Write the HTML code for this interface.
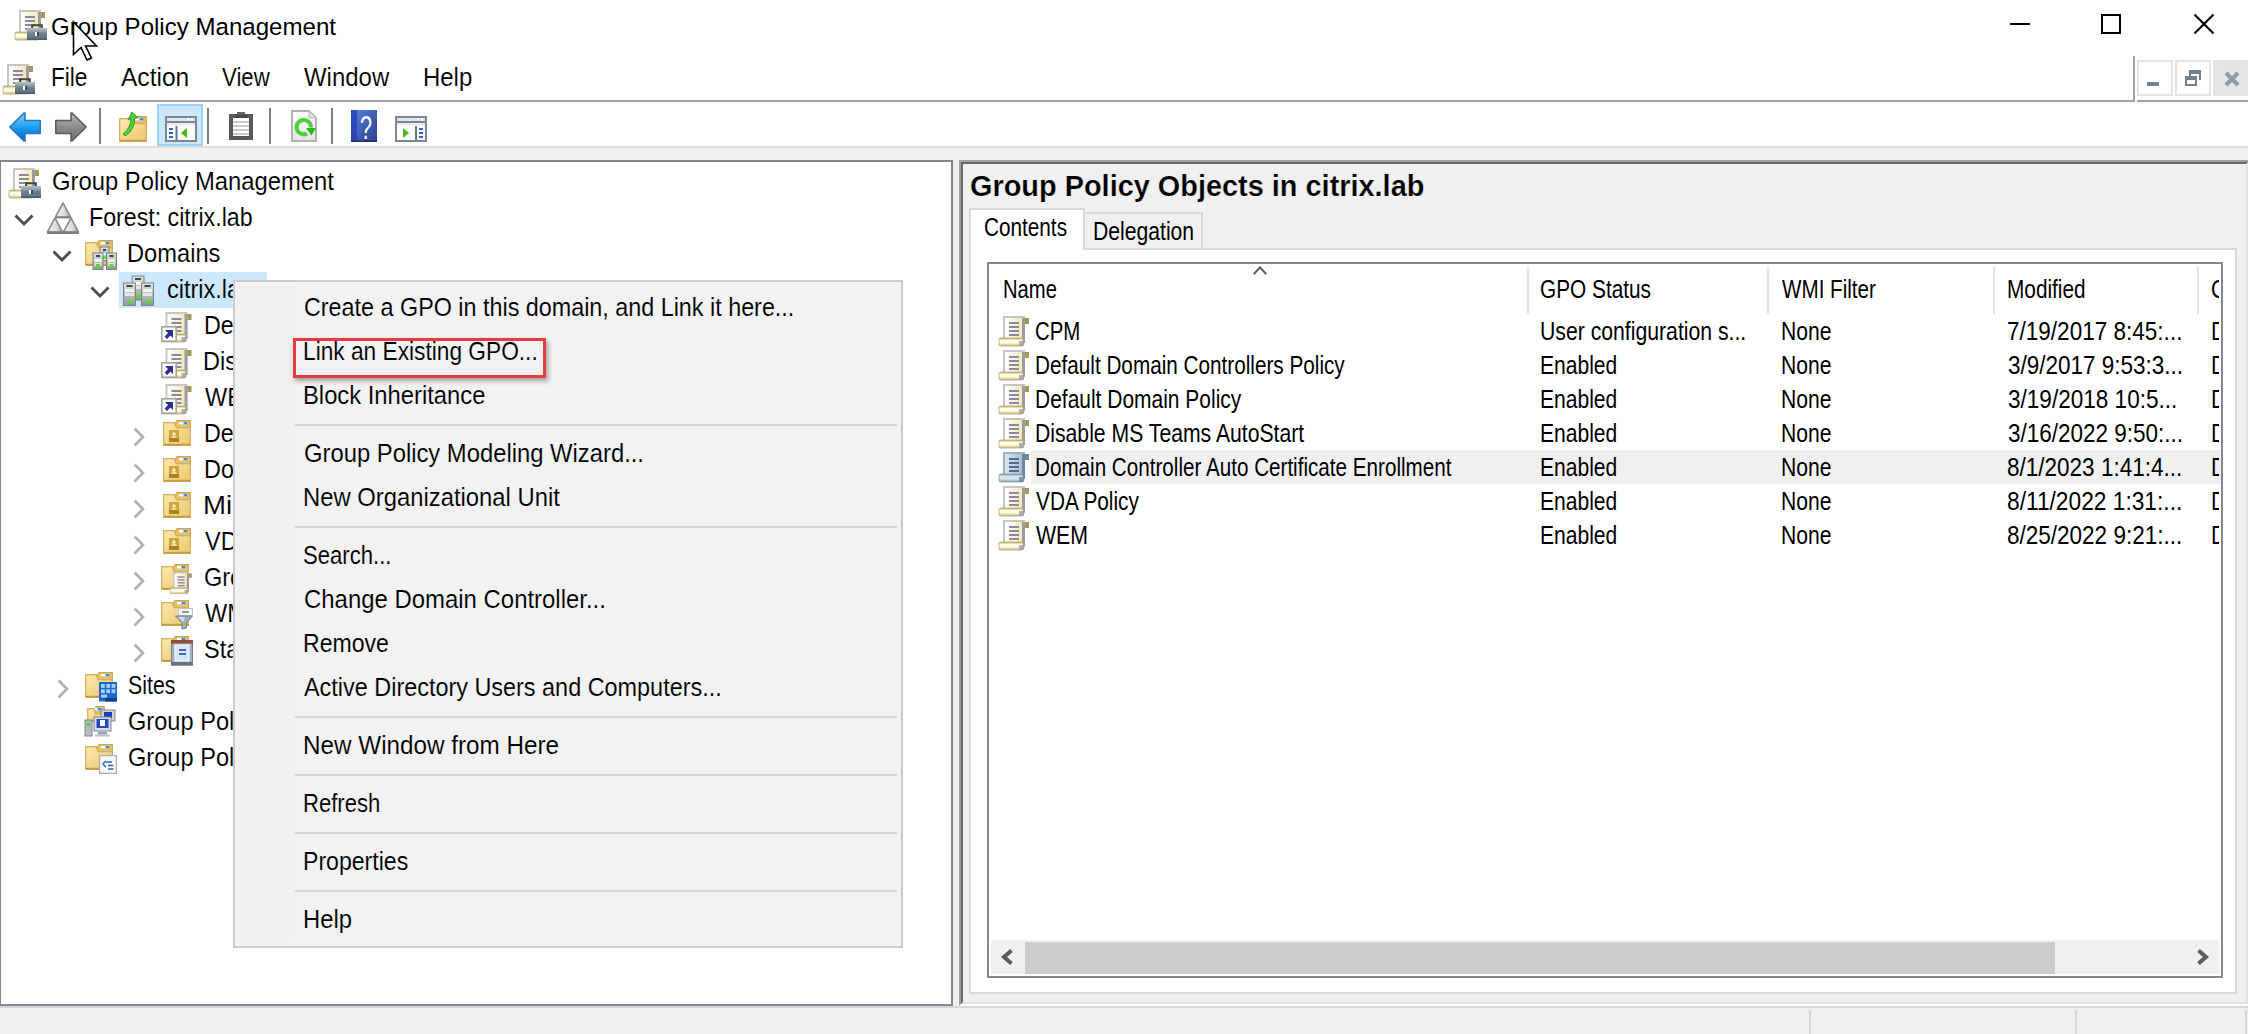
<!DOCTYPE html>
<html lang="en"><head><meta charset="utf-8"><title>Group Policy Management</title>
<style>
html,body{margin:0;padding:0;background:#fff;}
body{width:2248px;height:1034px;position:relative;overflow:hidden;font-family:"Liberation Sans",sans-serif;color:#000;}
.sec{position:absolute;left:0;top:0;width:0;height:0;margin:0;padding:0;}
.b{position:absolute;}
.ic{position:absolute;display:block;overflow:visible;}
.t{position:absolute;white-space:pre;transform-origin:0 0;display:block;}
.ui{font-family:"Liberation Sans",sans-serif;}
.ms{font-family:"Liberation Sans",sans-serif;}
.msb{font-family:"Liberation Sans",sans-serif;font-weight:bold;}
</style></head>
<body>
<header id="titlebar" class="sec">
<svg class="ic" style="left:15px;top:8px" width="32" height="32" viewBox="0 0 32 32"><linearGradient id="g2" x1="0" y1="0" x2="1" y2="0"><stop offset="0" stop-color="#ffffff"/><stop offset="1" stop-color="#f6e8b4"/></linearGradient><linearGradient id="g3" x1="0" y1="0" x2="0" y2="1"><stop offset="0" stop-color="#b9a867"/><stop offset="0.3" stop-color="#fffbe6"/><stop offset="0.6" stop-color="#fffbe6"/><stop offset="1" stop-color="#c9b97c"/></linearGradient><g transform="translate(-1,2)"><rect x="5" y="0" width="22" height="27" fill="#c6c6c6"/><rect x="23" y="2" width="4" height="25" fill="#9c9ca4"/><rect x="7" y="2" width="17" height="24" fill="url(#g2)"/><rect x="27" y="2" width="4" height="6" fill="#a89858"/><rect x="25" y="2" width="2" height="3" fill="#9c9ca4"/><rect x="11" y="6" width="10" height="2" fill="#8c88aa"/><rect x="11" y="10" width="10" height="2" fill="#8c88aa"/><rect x="11" y="14" width="10" height="2" fill="#8c88aa"/><rect x="11" y="18" width="10" height="2" fill="#8c88aa"/><rect x="1" y="22" width="24" height="8" rx="1.5" fill="url(#g3)" stroke="#b9a867" stroke-width="0.8"/><rect x="21" y="25" width="5" height="5" fill="#9c9ca4" opacity="0.8"/></g><linearGradient id="g1" x1="0" y1="0" x2="0" y2="1"><stop offset="0" stop-color="#b4c1cb"/><stop offset="0.3" stop-color="#8c9eab"/><stop offset="0.45" stop-color="#6f818e"/><stop offset="1" stop-color="#5d6f7c"/></linearGradient><path d="M17.2 21 L17.2 17.2 L26.8 17.2 L26.8 21" fill="none" stroke="#45433a" stroke-width="2"/><rect x="12" y="20" width="20" height="12" fill="url(#g1)"/><rect x="12" y="30.5" width="20" height="1.5" fill="#4d5c68"/><rect x="20" y="24" width="2" height="4" fill="#fff"/><rect x="22" y="24" width="2" height="4" fill="#3d4a55"/></svg>
<span id="t0" class="t ui" style="left:51.09px;top:15.46px;font-size:24.5px;line-height:24.5px;transform:scaleX(0.9824);">Group Policy Management</span>
<div class="b" style="left:2010px;top:23px;width:20px;height:2px;background:#000;"></div>
<div class="b" style="left:2101px;top:14px;width:20px;height:20px;border:2px solid #000;box-sizing:border-box;"></div>
<svg class="ic" style="left:2192px;top:12px" width="24" height="24" viewBox="0 0 24 24"><path d="M2.5 2.5 L21.5 21.5 M21.5 2.5 L2.5 21.5" stroke="#000" stroke-width="2.2" fill="none"/></svg>
</header>
<svg class="ic" style="left:72px;top:20px;z-index:50" width="28" height="42" viewBox="0 0 28 42"><path d="M1.5 2 L1.5 34.5 L9 27.5 L15 40 L19.5 38 L13.5 26 L24.5 26 Z" fill="#fff" stroke="#000" stroke-width="1.6" stroke-linejoin="miter"/></svg>
<nav id="menubar" class="sec">
<svg class="ic" style="left:3px;top:62px" width="32" height="32" viewBox="0 0 32 32"><linearGradient id="g5" x1="0" y1="0" x2="1" y2="0"><stop offset="0" stop-color="#ffffff"/><stop offset="1" stop-color="#f6e8b4"/></linearGradient><linearGradient id="g6" x1="0" y1="0" x2="0" y2="1"><stop offset="0" stop-color="#b9a867"/><stop offset="0.3" stop-color="#fffbe6"/><stop offset="0.6" stop-color="#fffbe6"/><stop offset="1" stop-color="#c9b97c"/></linearGradient><g transform="translate(-1,2)"><rect x="5" y="0" width="22" height="27" fill="#c6c6c6"/><rect x="23" y="2" width="4" height="25" fill="#9c9ca4"/><rect x="7" y="2" width="17" height="24" fill="url(#g5)"/><rect x="27" y="2" width="4" height="6" fill="#a89858"/><rect x="25" y="2" width="2" height="3" fill="#9c9ca4"/><rect x="11" y="6" width="10" height="2" fill="#8c88aa"/><rect x="11" y="10" width="10" height="2" fill="#8c88aa"/><rect x="11" y="14" width="10" height="2" fill="#8c88aa"/><rect x="11" y="18" width="10" height="2" fill="#8c88aa"/><rect x="1" y="22" width="24" height="8" rx="1.5" fill="url(#g6)" stroke="#b9a867" stroke-width="0.8"/><rect x="21" y="25" width="5" height="5" fill="#9c9ca4" opacity="0.8"/></g><linearGradient id="g4" x1="0" y1="0" x2="0" y2="1"><stop offset="0" stop-color="#b4c1cb"/><stop offset="0.3" stop-color="#8c9eab"/><stop offset="0.45" stop-color="#6f818e"/><stop offset="1" stop-color="#5d6f7c"/></linearGradient><path d="M17.2 21 L17.2 17.2 L26.8 17.2 L26.8 21" fill="none" stroke="#45433a" stroke-width="2"/><rect x="12" y="20" width="20" height="12" fill="url(#g4)"/><rect x="12" y="30.5" width="20" height="1.5" fill="#4d5c68"/><rect x="20" y="24" width="2" height="4" fill="#fff"/><rect x="22" y="24" width="2" height="4" fill="#3d4a55"/></svg>
<span id="t1" class="t ui" style="left:50.74px;top:64.67px;font-size:25.2px;line-height:25.2px;transform:scaleX(0.8982);-webkit-text-stroke:0.1px #fff;">File</span>
<span id="t2" class="t ui" style="left:120.95px;top:64.67px;font-size:25.2px;line-height:25.2px;transform:scaleX(0.9747);-webkit-text-stroke:0.1px #fff;">Action</span>
<span id="t3" class="t ui" style="left:222.20px;top:64.67px;font-size:25.2px;line-height:25.2px;transform:scaleX(0.8818);-webkit-text-stroke:0.1px #fff;">View</span>
<span id="t4" class="t ui" style="left:304.49px;top:64.67px;font-size:25.2px;line-height:25.2px;transform:scaleX(0.9515);-webkit-text-stroke:0.1px #fff;">Window</span>
<span id="t5" class="t ui" style="left:422.73px;top:64.67px;font-size:25.2px;line-height:25.2px;transform:scaleX(0.9510);-webkit-text-stroke:0.1px #fff;">Help</span>
<div class="b" style="left:0px;top:100px;width:2135px;height:2px;background:#a0a0a0;"></div>
<div class="b" style="left:2137px;top:100px;width:111px;height:2px;background:#a0a0a0;"></div>
<div class="b" style="left:2133px;top:56px;width:2px;height:46px;background:#a0a0a0;"></div>
<div class="b" style="left:0px;top:102px;width:2248px;height:2px;background:#f5f8fd;"></div>
<div class="b" style="left:2137px;top:60px;width:36px;height:36px;background:#fff;border:2px solid #e5e5e5;box-sizing:border-box;"></div>
<div class="b" style="left:2147px;top:82px;width:12px;height:4px;background:#73818f;"></div>
<div class="b" style="left:2175px;top:60px;width:36px;height:36px;background:#fff;border:2px solid #e5e5e5;box-sizing:border-box;"></div>
<div class="b" style="left:2189px;top:70px;width:12px;height:10px;border:2px solid #73818f;border-top-width:4px;border-bottom:none;box-sizing:border-box;"></div>
<div class="b" style="left:2185px;top:76px;width:12px;height:10px;background:#fff;border:2px solid #73818f;border-top-width:4px;box-sizing:border-box;"></div>
<div class="b" style="left:2213px;top:60px;width:35px;height:36px;background:#e5e5e5;"></div>
<svg class="ic" style="left:2224px;top:71px" width="16" height="16" viewBox="0 0 16 16"><path d="M2 2 L14 14 M14 2 L2 14" stroke="#8e9bab" stroke-width="4" fill="none"/></svg>
</nav>
<div id="toolbar" class="sec">
<svg class="ic" style="left:9px;top:112px" width="32" height="30" viewBox="0 0 32 30"><linearGradient id="g7" x1="0" y1="0" x2="0" y2="1"><stop offset="0" stop-color="#7fd4ff"/><stop offset="0.5" stop-color="#1ea0f5"/><stop offset="1" stop-color="#0a62c4"/></linearGradient><path d="M0.8 15 L15 1 L16 1 L16 8.5 L31.2 8.5 L31.2 21.5 L16 21.5 L16 29 L15 29 Z" fill="url(#g7)" stroke="#2a74c4" stroke-width="1.6" stroke-linejoin="round"/></svg>
<svg class="ic" style="left:55px;top:112px" width="32" height="30" viewBox="0 0 32 30"><linearGradient id="g8" x1="0" y1="0" x2="0" y2="1"><stop offset="0" stop-color="#b8b8b8"/><stop offset="0.5" stop-color="#8c8c8c"/><stop offset="1" stop-color="#707070"/></linearGradient><path d="M31.2 15 L17 1 L16 1 L16 8.5 L0.8 8.5 L0.8 21.5 L16 21.5 L16 29 L17 29 Z" fill="url(#g8)" stroke="#5c5c5c" stroke-width="1.6" stroke-linejoin="round"/></svg>
<div class="b" style="left:99px;top:108px;width:2px;height:36px;background:#808080;"></div>
<div class="b" style="left:207px;top:108px;width:2px;height:36px;background:#808080;"></div>
<div class="b" style="left:269px;top:108px;width:2px;height:36px;background:#808080;"></div>
<div class="b" style="left:331px;top:108px;width:2px;height:36px;background:#808080;"></div>
<svg class="ic" style="left:119px;top:112px" width="28" height="30" viewBox="0 0 28 30"><g transform="translate(0,4)"><linearGradient id="g9" x1="0" y1="0" x2="1" y2="1"><stop offset="0" stop-color="#fdeab0"/><stop offset="1" stop-color="#ebc56c"/></linearGradient><g transform="translate(0,0)"><path d="M12.04 4 L14.0 0.7 L27.3 0.7 L27.3 9 L12.04 9 Z" fill="#e6c16c" stroke="#cba552" stroke-width="1.2"/><rect x="16" y="2" width="8.5" height="2.4" fill="#fff"/><rect x="20.5" y="2" width="4" height="2.4" fill="#3f8ee8"/><path d="M0.7 2.7 L11.200000000000001 2.7 L13.16 7.6 L27.3 7.6 L27.3 25.3 L0.7 25.3 Z" fill="url(#g9)" stroke="#d6ad58" stroke-width="1.2"/><rect x="0.7" y="23.8" width="26.6" height="1.7" fill="#c59b46"/></g></g><path d="M4 22 Q12 16 12 6 L9 8 L13 0 L19 6 L15.5 6 Q16 18 6 24 Z" fill="#4fd13a" stroke="#2f9a22" stroke-width="1"/></svg>
<div class="b" style="left:157px;top:104px;width:46px;height:42px;background:#cce8ff;border:2px solid #99d1ff;box-sizing:border-box;"></div>
<svg class="ic" style="left:165px;top:116px" width="32" height="26" viewBox="0 0 32 26"><rect x="1" y="1" width="30" height="24" fill="#fafafa" stroke="#7f8892" stroke-width="2"/><rect x="2" y="2" width="28" height="3" fill="#dfe3ea"/><rect x="2" y="5" width="28" height="2" fill="#7a8499"/><rect x="2" y="7" width="28" height="2.5" fill="#e7eaf0"/><rect x="22" y="2.3" width="2" height="2" fill="#fff"/><rect x="26" y="2.3" width="2" height="2" fill="#fff"/><rect x="10.5" y="10" width="2" height="14" fill="#66738c"/><rect x="4" y="12" width="4" height="2" fill="#2f66c4"/><rect x="4" y="16" width="4" height="2" fill="#2f66c4"/><rect x="4" y="20" width="4" height="2" fill="#2f66c4"/><path d="M22 12 L22 22 L16 17 Z" fill="#4cb817"/></svg>
<svg class="ic" style="left:229px;top:112px" width="24" height="28" viewBox="0 0 24 28"><rect x="2" y="4" width="20" height="22" fill="#fff" stroke="#585858" stroke-width="4"/><rect x="4" y="9" width="16" height="2" fill="#c8c8c8"/><rect x="4" y="13" width="16" height="2" fill="#c8c8c8"/><rect x="4" y="17" width="16" height="2" fill="#c8c8c8"/><rect x="4" y="21" width="16" height="2" fill="#c8c8c8"/><rect x="6" y="2" width="12" height="4" fill="#4a4a4a"/><rect x="8" y="0" width="8" height="2.5" fill="#666"/></svg>
<svg class="ic" style="left:291px;top:110px" width="26" height="32" viewBox="0 0 26 32"><linearGradient id="g10" x1="0" y1="0" x2="0" y2="1"><stop offset="0" stop-color="#ffffff"/><stop offset="1" stop-color="#e4e4e4"/></linearGradient><path d="M1 1 L18 1 L25 8 L25 31 L1 31 Z" fill="url(#g10)" stroke="#b0b0b0" stroke-width="2"/><path d="M18 1 L18 8 L25 8 Z" fill="#e0e0e0" stroke="#b8b8b8" stroke-width="1"/><path d="M20 17.5 A7.2 7.2 0 1 0 16 23.6" fill="none" stroke="#4fce3c" stroke-width="4"/><path d="M15 18 L25 18 L20.5 25.5 Z" fill="#2fb81f"/></svg>
<svg class="ic" style="left:351px;top:110px" width="26" height="32" viewBox="0 0 26 32"><linearGradient id="g11" x1="0" y1="0" x2="1" y2="1"><stop offset="0" stop-color="#5b82e4"/><stop offset="1" stop-color="#2c3f8c"/></linearGradient><rect x="0" y="0" width="26" height="32" fill="url(#g11)"/><rect x="0" y="0" width="6" height="32" fill="#2443b8" opacity="0.85"/><rect x="0" y="30.5" width="26" height="1.5" fill="#1f2f6c"/><text x="9" y="28.5" font-family="Liberation Sans, sans-serif" font-size="33" textLength="12" lengthAdjust="spacingAndGlyphs" fill="#ffffff">?</text></svg>
<svg class="ic" style="left:395px;top:116px" width="32" height="26" viewBox="0 0 32 26"><rect x="1" y="1" width="30" height="24" fill="#fafafa" stroke="#7f8892" stroke-width="2"/><rect x="2" y="2" width="28" height="3" fill="#dfe3ea"/><rect x="2" y="5" width="28" height="2" fill="#7a8499"/><rect x="2" y="7" width="28" height="2.5" fill="#e7eaf0"/><rect x="22" y="2.3" width="2" height="2" fill="#fff"/><rect x="26" y="2.3" width="2" height="2" fill="#fff"/><rect x="20" y="10" width="2" height="14" fill="#66738c"/><rect x="24" y="12" width="4" height="2" fill="#2f66c4"/><rect x="24" y="16" width="4" height="2" fill="#2f66c4"/><rect x="24" y="20" width="4" height="2" fill="#2f66c4"/><path d="M8 12 L8 22 L14 17 Z" fill="#4cb817"/></svg>
<div class="b" style="left:0px;top:146px;width:2248px;height:2px;background:#dddddd;"></div>
<div class="b" style="left:0px;top:148px;width:2248px;height:12px;background:#f0f0f0;"></div>
</div>
<aside id="tree" class="sec">
<div class="b" style="left:-1px;top:160px;width:954px;height:846px;background:#fff;border:2px solid #828790;box-sizing:border-box;"></div>
<div class="b" style="left:953px;top:160px;width:6px;height:847px;background:#f0f0f0;"></div>
<div class="b" style="left:0px;top:1006px;width:2248px;height:28px;background:#f0f0f0;"></div>
<svg class="ic" style="left:9px;top:166px" width="32" height="32" viewBox="0 0 32 32"><linearGradient id="g13" x1="0" y1="0" x2="1" y2="0"><stop offset="0" stop-color="#ffffff"/><stop offset="1" stop-color="#f6e8b4"/></linearGradient><linearGradient id="g14" x1="0" y1="0" x2="0" y2="1"><stop offset="0" stop-color="#b9a867"/><stop offset="0.3" stop-color="#fffbe6"/><stop offset="0.6" stop-color="#fffbe6"/><stop offset="1" stop-color="#c9b97c"/></linearGradient><g transform="translate(-1,2)"><rect x="5" y="0" width="22" height="27" fill="#c6c6c6"/><rect x="23" y="2" width="4" height="25" fill="#9c9ca4"/><rect x="7" y="2" width="17" height="24" fill="url(#g13)"/><rect x="27" y="2" width="4" height="6" fill="#a89858"/><rect x="25" y="2" width="2" height="3" fill="#9c9ca4"/><rect x="11" y="6" width="10" height="2" fill="#8c88aa"/><rect x="11" y="10" width="10" height="2" fill="#8c88aa"/><rect x="11" y="14" width="10" height="2" fill="#8c88aa"/><rect x="11" y="18" width="10" height="2" fill="#8c88aa"/><rect x="1" y="22" width="24" height="8" rx="1.5" fill="url(#g14)" stroke="#b9a867" stroke-width="0.8"/><rect x="21" y="25" width="5" height="5" fill="#9c9ca4" opacity="0.8"/></g><linearGradient id="g12" x1="0" y1="0" x2="0" y2="1"><stop offset="0" stop-color="#b4c1cb"/><stop offset="0.3" stop-color="#8c9eab"/><stop offset="0.45" stop-color="#6f818e"/><stop offset="1" stop-color="#5d6f7c"/></linearGradient><path d="M17.2 21 L17.2 17.2 L26.8 17.2 L26.8 21" fill="none" stroke="#45433a" stroke-width="2"/><rect x="12" y="20" width="20" height="12" fill="url(#g12)"/><rect x="12" y="30.5" width="20" height="1.5" fill="#4d5c68"/><rect x="20" y="24" width="2" height="4" fill="#fff"/><rect x="22" y="24" width="2" height="4" fill="#3d4a55"/></svg>
<span id="t6" class="t ui" style="left:52.00px;top:168.67px;font-size:25.2px;line-height:25.2px;transform:scaleX(0.9452);-webkit-text-stroke:0.1px #fff;">Group Policy Management</span>
<svg class="ic" style="left:47px;top:202px" width="32" height="32" viewBox="0 0 32 32"><linearGradient id="g15" x1="0" y1="0" x2="1" y2="0"><stop offset="0" stop-color="#f6f6f6"/><stop offset="0.6" stop-color="#dcdcdc"/><stop offset="1" stop-color="#9c9c9c"/></linearGradient><polygon points="16,1 23.5,15 8.5,15" fill="url(#g15)" stroke="#8e8e8e" stroke-width="1.6" stroke-linejoin="round"/><polygon points="8,16 15.5,30 0.5,30" fill="url(#g15)" stroke="#8e8e8e" stroke-width="1.6" stroke-linejoin="round"/><polygon points="24,16 31.5,30 16.5,30" fill="url(#g15)" stroke="#8e8e8e" stroke-width="1.6" stroke-linejoin="round"/><rect x="0" y="29.5" width="32" height="2.5" fill="#7e7e7e"/><rect x="8" y="14.6" width="16" height="1.8" fill="#7e7e7e"/></svg>
<span id="t7" class="t ui" style="left:88.60px;top:204.67px;font-size:25.2px;line-height:25.2px;transform:scaleX(0.9202);-webkit-text-stroke:0.1px #fff;">Forest: citrix.lab</span>
<svg class="ic" style="left:14px;top:214px" width="20" height="12" viewBox="0 0 20 12"><path d="M1.5 1.5 L10 10 L18.5 1.5" stroke="#4f4f4f" stroke-width="2.9" fill="none"/></svg>
<svg class="ic" style="left:85px;top:238px" width="32" height="32" viewBox="0 0 32 32"><linearGradient id="g16" x1="0" y1="0" x2="1" y2="1"><stop offset="0" stop-color="#fdeab0"/><stop offset="1" stop-color="#ebc56c"/></linearGradient><g transform="translate(0,2)"><path d="M12.04 4 L14.0 0.7 L27.3 0.7 L27.3 9 L12.04 9 Z" fill="#e6c16c" stroke="#cba552" stroke-width="1.2"/><rect x="16" y="2" width="8.5" height="2.4" fill="#fff"/><rect x="20.5" y="2" width="4" height="2.4" fill="#3f8ee8"/><path d="M0.7 2.7 L11.200000000000001 2.7 L13.16 7.6 L27.3 7.6 L27.3 25.3 L0.7 25.3 Z" fill="url(#g16)" stroke="#d6ad58" stroke-width="1.2"/><rect x="0.7" y="23.8" width="26.6" height="1.7" fill="#c59b46"/></g><linearGradient id="g17" x1="0" y1="0" x2="0" y2="1"><stop offset="0" stop-color="#dfe3e3"/><stop offset="0.5" stop-color="#b8bfc0"/><stop offset="1" stop-color="#8d9698"/></linearGradient><rect x="15" y="9" width="9" height="14" fill="url(#g17)" stroke="#7b8587" stroke-width="1"/><rect x="18" y="11" width="3" height="2" fill="#39474f"/><rect x="16.5" y="15" width="6" height="3" fill="#f1f3f3"/><rect x="16.5" y="19" width="6" height="3" fill="#e2e6e6"/><rect x="17" y="17.5" width="4" height="3.5" fill="#52e01f"/><linearGradient id="g18" x1="0" y1="0" x2="0" y2="1"><stop offset="0" stop-color="#dfe3e3"/><stop offset="0.5" stop-color="#b8bfc0"/><stop offset="1" stop-color="#8d9698"/></linearGradient><rect x="8" y="15" width="10" height="16.5" fill="url(#g18)" stroke="#7b8587" stroke-width="1"/><rect x="11" y="17" width="4" height="2" fill="#39474f"/><rect x="9.5" y="21" width="7" height="3" fill="#f1f3f3"/><rect x="9.5" y="25" width="7" height="3" fill="#e2e6e6"/><rect x="11" y="26.0" width="4" height="3.5" fill="#52e01f"/><linearGradient id="g19" x1="0" y1="0" x2="0" y2="1"><stop offset="0" stop-color="#dfe3e3"/><stop offset="0.5" stop-color="#b8bfc0"/><stop offset="1" stop-color="#8d9698"/></linearGradient><rect x="21.5" y="15" width="10" height="16.5" fill="url(#g19)" stroke="#7b8587" stroke-width="1"/><rect x="24.5" y="17" width="4" height="2" fill="#39474f"/><rect x="23.0" y="21" width="7" height="3" fill="#f1f3f3"/><rect x="23.0" y="25" width="7" height="3" fill="#e2e6e6"/><rect x="24.5" y="26.0" width="4" height="3.5" fill="#52e01f"/></svg>
<span id="t8" class="t ui" style="left:127.46px;top:240.67px;font-size:25.2px;line-height:25.2px;transform:scaleX(0.9397);-webkit-text-stroke:0.1px #fff;">Domains</span>
<svg class="ic" style="left:52px;top:250px" width="20" height="12" viewBox="0 0 20 12"><path d="M1.5 1.5 L10 10 L18.5 1.5" stroke="#4f4f4f" stroke-width="2.9" fill="none"/></svg>
<div class="b" style="left:119px;top:272px;width:148px;height:36px;background:#cce8ff;"></div>
<svg class="ic" style="left:123px;top:274px" width="32" height="32" viewBox="0 0 32 32"><linearGradient id="g20" x1="0" y1="0" x2="0" y2="1"><stop offset="0" stop-color="#dfe3e3"/><stop offset="0.5" stop-color="#b8bfc0"/><stop offset="1" stop-color="#8d9698"/></linearGradient><rect x="9" y="2" width="12" height="24" fill="url(#g20)" stroke="#7b8587" stroke-width="1"/><rect x="12" y="4" width="6" height="2" fill="#39474f"/><rect x="10.5" y="8" width="9" height="3" fill="#f1f3f3"/><rect x="10.5" y="12" width="9" height="3" fill="#e2e6e6"/><rect x="14" y="20.5" width="4" height="3.5" fill="#52e01f"/><linearGradient id="g21" x1="0" y1="0" x2="0" y2="1"><stop offset="0" stop-color="#dfe3e3"/><stop offset="0.5" stop-color="#b8bfc0"/><stop offset="1" stop-color="#8d9698"/></linearGradient><rect x="0.5" y="9" width="12" height="22.5" fill="url(#g21)" stroke="#7b8587" stroke-width="1"/><rect x="3.5" y="11" width="6" height="2" fill="#39474f"/><rect x="2.0" y="15" width="9" height="3" fill="#f1f3f3"/><rect x="2.0" y="19" width="9" height="3" fill="#e2e6e6"/><rect x="5.5" y="26.0" width="4" height="3.5" fill="#52e01f"/><linearGradient id="g22" x1="0" y1="0" x2="0" y2="1"><stop offset="0" stop-color="#dfe3e3"/><stop offset="0.5" stop-color="#b8bfc0"/><stop offset="1" stop-color="#8d9698"/></linearGradient><rect x="18.5" y="9" width="12" height="22.5" fill="url(#g22)" stroke="#7b8587" stroke-width="1"/><rect x="21.5" y="11" width="6" height="2" fill="#39474f"/><rect x="20.0" y="15" width="9" height="3" fill="#f1f3f3"/><rect x="20.0" y="19" width="9" height="3" fill="#e2e6e6"/><rect x="23.5" y="26.0" width="4" height="3.5" fill="#52e01f"/></svg>
<span id="t9" class="t ui" style="left:166.60px;top:276.67px;font-size:25.2px;line-height:25.2px;transform:scaleX(0.9336);-webkit-text-stroke:0.1px #cce8ff;">citrix.lab</span>
<div class="b" style="left:235px;top:272px;width:32px;height:8px;background:#cce8ff;"></div>
<svg class="ic" style="left:90px;top:286px" width="20" height="12" viewBox="0 0 20 12"><path d="M1.5 1.5 L10 10 L18.5 1.5" stroke="#4f4f4f" stroke-width="2.9" fill="none"/></svg>
<svg class="ic" style="left:161px;top:310px" width="32" height="32" viewBox="0 0 32 32"><linearGradient id="g23" x1="0" y1="0" x2="1" y2="0"><stop offset="0" stop-color="#ffffff"/><stop offset="1" stop-color="#f6e8b4"/></linearGradient><linearGradient id="g24" x1="0" y1="0" x2="0" y2="1"><stop offset="0" stop-color="#b9a867"/><stop offset="0.3" stop-color="#fffbe6"/><stop offset="0.6" stop-color="#fffbe6"/><stop offset="1" stop-color="#c9b97c"/></linearGradient><g transform="translate(-0.5,2)"><rect x="5" y="0" width="22" height="27" fill="#c6c6c6"/><rect x="23" y="2" width="4" height="25" fill="#9c9ca4"/><rect x="7" y="2" width="17" height="24" fill="url(#g23)"/><rect x="27" y="2" width="4" height="6" fill="#a89858"/><rect x="25" y="2" width="2" height="3" fill="#9c9ca4"/><rect x="11" y="6" width="10" height="2" fill="#8c88aa"/><rect x="11" y="10" width="10" height="2" fill="#8c88aa"/><rect x="11" y="14" width="10" height="2" fill="#8c88aa"/><rect x="11" y="18" width="10" height="2" fill="#8c88aa"/><rect x="1" y="22" width="24" height="8" rx="1.5" fill="url(#g24)" stroke="#b9a867" stroke-width="0.8"/><rect x="21" y="25" width="5" height="5" fill="#9c9ca4" opacity="0.8"/></g><rect x="0.8" y="16.8" width="14.4" height="14.4" fill="#fff" stroke="#a4a4a4" stroke-width="1.6"/><path d="M4 20 L12 20 L12 28 L9.5 25.5 L6 29 L3.6 26.6 L7 23 Z" fill="#2b2f94"/></svg>
<span id="t10" class="t ui" style="left:203.59px;top:312.67px;font-size:25.2px;line-height:25.2px;transform:scaleX(0.9236);-webkit-text-stroke:0.1px #fff;">Default Domain Policy</span>
<svg class="ic" style="left:161px;top:346px" width="32" height="32" viewBox="0 0 32 32"><linearGradient id="g25" x1="0" y1="0" x2="1" y2="0"><stop offset="0" stop-color="#ffffff"/><stop offset="1" stop-color="#f6e8b4"/></linearGradient><linearGradient id="g26" x1="0" y1="0" x2="0" y2="1"><stop offset="0" stop-color="#b9a867"/><stop offset="0.3" stop-color="#fffbe6"/><stop offset="0.6" stop-color="#fffbe6"/><stop offset="1" stop-color="#c9b97c"/></linearGradient><g transform="translate(-0.5,2)"><rect x="5" y="0" width="22" height="27" fill="#c6c6c6"/><rect x="23" y="2" width="4" height="25" fill="#9c9ca4"/><rect x="7" y="2" width="17" height="24" fill="url(#g25)"/><rect x="27" y="2" width="4" height="6" fill="#a89858"/><rect x="25" y="2" width="2" height="3" fill="#9c9ca4"/><rect x="11" y="6" width="10" height="2" fill="#8c88aa"/><rect x="11" y="10" width="10" height="2" fill="#8c88aa"/><rect x="11" y="14" width="10" height="2" fill="#8c88aa"/><rect x="11" y="18" width="10" height="2" fill="#8c88aa"/><rect x="1" y="22" width="24" height="8" rx="1.5" fill="url(#g26)" stroke="#b9a867" stroke-width="0.8"/><rect x="21" y="25" width="5" height="5" fill="#9c9ca4" opacity="0.8"/></g><rect x="0.8" y="16.8" width="14.4" height="14.4" fill="#fff" stroke="#a4a4a4" stroke-width="1.6"/><path d="M4 20 L12 20 L12 28 L9.5 25.5 L6 29 L3.6 26.6 L7 23 Z" fill="#2b2f94"/></svg>
<span id="t11" class="t ui" style="left:203.07px;top:348.67px;font-size:25.2px;line-height:25.2px;transform:scaleX(0.9336);-webkit-text-stroke:0.1px #fff;">Disable MS Teams AutoStart</span>
<svg class="ic" style="left:161px;top:382px" width="32" height="32" viewBox="0 0 32 32"><linearGradient id="g27" x1="0" y1="0" x2="1" y2="0"><stop offset="0" stop-color="#ffffff"/><stop offset="1" stop-color="#f6e8b4"/></linearGradient><linearGradient id="g28" x1="0" y1="0" x2="0" y2="1"><stop offset="0" stop-color="#b9a867"/><stop offset="0.3" stop-color="#fffbe6"/><stop offset="0.6" stop-color="#fffbe6"/><stop offset="1" stop-color="#c9b97c"/></linearGradient><g transform="translate(-0.5,2)"><rect x="5" y="0" width="22" height="27" fill="#c6c6c6"/><rect x="23" y="2" width="4" height="25" fill="#9c9ca4"/><rect x="7" y="2" width="17" height="24" fill="url(#g27)"/><rect x="27" y="2" width="4" height="6" fill="#a89858"/><rect x="25" y="2" width="2" height="3" fill="#9c9ca4"/><rect x="11" y="6" width="10" height="2" fill="#8c88aa"/><rect x="11" y="10" width="10" height="2" fill="#8c88aa"/><rect x="11" y="14" width="10" height="2" fill="#8c88aa"/><rect x="11" y="18" width="10" height="2" fill="#8c88aa"/><rect x="1" y="22" width="24" height="8" rx="1.5" fill="url(#g28)" stroke="#b9a867" stroke-width="0.8"/><rect x="21" y="25" width="5" height="5" fill="#9c9ca4" opacity="0.8"/></g><rect x="0.8" y="16.8" width="14.4" height="14.4" fill="#fff" stroke="#a4a4a4" stroke-width="1.6"/><path d="M4 20 L12 20 L12 28 L9.5 25.5 L6 29 L3.6 26.6 L7 23 Z" fill="#2b2f94"/></svg>
<span id="t12" class="t ui" style="left:204.90px;top:384.67px;font-size:25.2px;line-height:25.2px;transform:scaleX(0.9336);-webkit-text-stroke:0.1px #fff;">WEM</span>
<svg class="ic" style="left:161px;top:418px" width="32" height="32" viewBox="0 0 32 32"><linearGradient id="g29" x1="0" y1="0" x2="1" y2="1"><stop offset="0" stop-color="#fdeab0"/><stop offset="1" stop-color="#ebc56c"/></linearGradient><g transform="translate(2,2)"><path d="M12.04 4 L14.0 0.7 L27.3 0.7 L27.3 9 L12.04 9 Z" fill="#e6c16c" stroke="#cba552" stroke-width="1.2"/><rect x="16" y="2" width="8.5" height="2.4" fill="#fff"/><rect x="20.5" y="2" width="4" height="2.4" fill="#3f8ee8"/><path d="M0.7 2.7 L11.200000000000001 2.7 L13.16 7.6 L27.3 7.6 L27.3 25.3 L0.7 25.3 Z" fill="url(#g29)" stroke="#d6ad58" stroke-width="1.2"/><rect x="0.7" y="23.8" width="26.6" height="1.7" fill="#c59b46"/></g><rect x="8" y="12" width="10" height="12" fill="#cfa740"/><rect x="8" y="20" width="10" height="4" fill="#ac841f"/><circle cx="13" cy="16" r="1.8" fill="#f8ecb8"/><path d="M9.8 20 Q13 15.5 16.2 20 Z" fill="#f3e3a4"/></svg>
<span id="t13" class="t ui" style="left:203.59px;top:420.67px;font-size:25.2px;line-height:25.2px;transform:scaleX(0.9236);-webkit-text-stroke:0.1px #fff;">Delivery Controllers</span>
<svg class="ic" style="left:133px;top:427px" width="12" height="20" viewBox="0 0 12 20"><path d="M1.5 1.5 L10 10 L1.5 18.5" stroke="#b0b0b0" stroke-width="2.7" fill="none"/></svg>
<svg class="ic" style="left:161px;top:454px" width="32" height="32" viewBox="0 0 32 32"><linearGradient id="g30" x1="0" y1="0" x2="1" y2="1"><stop offset="0" stop-color="#fdeab0"/><stop offset="1" stop-color="#ebc56c"/></linearGradient><g transform="translate(2,2)"><path d="M12.04 4 L14.0 0.7 L27.3 0.7 L27.3 9 L12.04 9 Z" fill="#e6c16c" stroke="#cba552" stroke-width="1.2"/><rect x="16" y="2" width="8.5" height="2.4" fill="#fff"/><rect x="20.5" y="2" width="4" height="2.4" fill="#3f8ee8"/><path d="M0.7 2.7 L11.200000000000001 2.7 L13.16 7.6 L27.3 7.6 L27.3 25.3 L0.7 25.3 Z" fill="url(#g30)" stroke="#d6ad58" stroke-width="1.2"/><rect x="0.7" y="23.8" width="26.6" height="1.7" fill="#c59b46"/></g><rect x="8" y="12" width="10" height="12" fill="#cfa740"/><rect x="8" y="20" width="10" height="4" fill="#ac841f"/><circle cx="13" cy="16" r="1.8" fill="#f8ecb8"/><path d="M9.8 20 Q13 15.5 16.2 20 Z" fill="#f3e3a4"/></svg>
<span id="t14" class="t ui" style="left:203.58px;top:456.67px;font-size:25.2px;line-height:25.2px;transform:scaleX(0.9285);-webkit-text-stroke:0.1px #fff;">Domain Controllers</span>
<svg class="ic" style="left:133px;top:463px" width="12" height="20" viewBox="0 0 12 20"><path d="M1.5 1.5 L10 10 L1.5 18.5" stroke="#b0b0b0" stroke-width="2.7" fill="none"/></svg>
<svg class="ic" style="left:161px;top:490px" width="32" height="32" viewBox="0 0 32 32"><linearGradient id="g31" x1="0" y1="0" x2="1" y2="1"><stop offset="0" stop-color="#fdeab0"/><stop offset="1" stop-color="#ebc56c"/></linearGradient><g transform="translate(2,2)"><path d="M12.04 4 L14.0 0.7 L27.3 0.7 L27.3 9 L12.04 9 Z" fill="#e6c16c" stroke="#cba552" stroke-width="1.2"/><rect x="16" y="2" width="8.5" height="2.4" fill="#fff"/><rect x="20.5" y="2" width="4" height="2.4" fill="#3f8ee8"/><path d="M0.7 2.7 L11.200000000000001 2.7 L13.16 7.6 L27.3 7.6 L27.3 25.3 L0.7 25.3 Z" fill="url(#g31)" stroke="#d6ad58" stroke-width="1.2"/><rect x="0.7" y="23.8" width="26.6" height="1.7" fill="#c59b46"/></g><rect x="8" y="12" width="10" height="12" fill="#cfa740"/><rect x="8" y="20" width="10" height="4" fill="#ac841f"/><circle cx="13" cy="16" r="1.8" fill="#f8ecb8"/><path d="M9.8 20 Q13 15.5 16.2 20 Z" fill="#f3e3a4"/></svg>
<span id="t15" class="t ui" style="left:203.23px;top:492.67px;font-size:25.2px;line-height:25.2px;transform:scaleX(1.0959);-webkit-text-stroke:0.1px #fff;">Microsoft Exchange Security Groups</span>
<svg class="ic" style="left:133px;top:499px" width="12" height="20" viewBox="0 0 12 20"><path d="M1.5 1.5 L10 10 L1.5 18.5" stroke="#b0b0b0" stroke-width="2.7" fill="none"/></svg>
<svg class="ic" style="left:161px;top:526px" width="32" height="32" viewBox="0 0 32 32"><linearGradient id="g32" x1="0" y1="0" x2="1" y2="1"><stop offset="0" stop-color="#fdeab0"/><stop offset="1" stop-color="#ebc56c"/></linearGradient><g transform="translate(2,2)"><path d="M12.04 4 L14.0 0.7 L27.3 0.7 L27.3 9 L12.04 9 Z" fill="#e6c16c" stroke="#cba552" stroke-width="1.2"/><rect x="16" y="2" width="8.5" height="2.4" fill="#fff"/><rect x="20.5" y="2" width="4" height="2.4" fill="#3f8ee8"/><path d="M0.7 2.7 L11.200000000000001 2.7 L13.16 7.6 L27.3 7.6 L27.3 25.3 L0.7 25.3 Z" fill="url(#g32)" stroke="#d6ad58" stroke-width="1.2"/><rect x="0.7" y="23.8" width="26.6" height="1.7" fill="#c59b46"/></g><rect x="8" y="12" width="10" height="12" fill="#cfa740"/><rect x="8" y="20" width="10" height="4" fill="#ac841f"/><circle cx="13" cy="16" r="1.8" fill="#f8ecb8"/><path d="M9.8 20 Q13 15.5 16.2 20 Z" fill="#f3e3a4"/></svg>
<span id="t16" class="t ui" style="left:204.90px;top:528.67px;font-size:25.2px;line-height:25.2px;transform:scaleX(0.9336);-webkit-text-stroke:0.1px #fff;">VDA</span>
<svg class="ic" style="left:133px;top:535px" width="12" height="20" viewBox="0 0 12 20"><path d="M1.5 1.5 L10 10 L1.5 18.5" stroke="#b0b0b0" stroke-width="2.7" fill="none"/></svg>
<svg class="ic" style="left:161px;top:562px" width="32" height="32" viewBox="0 0 32 32"><linearGradient id="g33" x1="0" y1="0" x2="1" y2="1"><stop offset="0" stop-color="#fdeab0"/><stop offset="1" stop-color="#ebc56c"/></linearGradient><g transform="translate(0,2)"><path d="M12.04 4 L14.0 0.7 L27.3 0.7 L27.3 9 L12.04 9 Z" fill="#e6c16c" stroke="#cba552" stroke-width="1.2"/><rect x="16" y="2" width="8.5" height="2.4" fill="#fff"/><rect x="20.5" y="2" width="4" height="2.4" fill="#3f8ee8"/><path d="M0.7 2.7 L11.200000000000001 2.7 L13.16 7.6 L27.3 7.6 L27.3 25.3 L0.7 25.3 Z" fill="url(#g33)" stroke="#d6ad58" stroke-width="1.2"/><rect x="0.7" y="23.8" width="26.6" height="1.7" fill="#c59b46"/></g><g transform="translate(8.5,10) scale(0.72)"><linearGradient id="g34" x1="0" y1="0" x2="1" y2="0"><stop offset="0" stop-color="#ffffff"/><stop offset="1" stop-color="#f6e8b4"/></linearGradient><linearGradient id="g35" x1="0" y1="0" x2="0" y2="1"><stop offset="0" stop-color="#b9a867"/><stop offset="0.3" stop-color="#fffbe6"/><stop offset="0.6" stop-color="#fffbe6"/><stop offset="1" stop-color="#c9b97c"/></linearGradient><g transform="translate(0,0)"><rect x="5" y="0" width="22" height="27" fill="#c6c6c6"/><rect x="23" y="2" width="4" height="25" fill="#9c9ca4"/><rect x="7" y="2" width="17" height="24" fill="url(#g34)"/><rect x="27" y="2" width="4" height="6" fill="#a89858"/><rect x="25" y="2" width="2" height="3" fill="#9c9ca4"/><rect x="11" y="6" width="10" height="2" fill="#8c88aa"/><rect x="11" y="10" width="10" height="2" fill="#8c88aa"/><rect x="11" y="14" width="10" height="2" fill="#8c88aa"/><rect x="11" y="18" width="10" height="2" fill="#8c88aa"/><rect x="1" y="22" width="24" height="8" rx="1.5" fill="url(#g35)" stroke="#b9a867" stroke-width="0.8"/><rect x="21" y="25" width="5" height="5" fill="#9c9ca4" opacity="0.8"/></g></g></svg>
<span id="t17" class="t ui" style="left:203.82px;top:564.67px;font-size:25.2px;line-height:25.2px;transform:scaleX(0.9336);-webkit-text-stroke:0.1px #fff;">Group Policy Objects</span>
<svg class="ic" style="left:133px;top:571px" width="12" height="20" viewBox="0 0 12 20"><path d="M1.5 1.5 L10 10 L1.5 18.5" stroke="#b0b0b0" stroke-width="2.7" fill="none"/></svg>
<svg class="ic" style="left:161px;top:598px" width="32" height="32" viewBox="0 0 32 32"><linearGradient id="g36" x1="0" y1="0" x2="1" y2="1"><stop offset="0" stop-color="#fdeab0"/><stop offset="1" stop-color="#ebc56c"/></linearGradient><g transform="translate(0,2)"><path d="M12.04 4 L14.0 0.7 L27.3 0.7 L27.3 9 L12.04 9 Z" fill="#e6c16c" stroke="#cba552" stroke-width="1.2"/><rect x="16" y="2" width="8.5" height="2.4" fill="#fff"/><rect x="20.5" y="2" width="4" height="2.4" fill="#3f8ee8"/><path d="M0.7 2.7 L11.200000000000001 2.7 L13.16 7.6 L27.3 7.6 L27.3 25.3 L0.7 25.3 Z" fill="url(#g36)" stroke="#d6ad58" stroke-width="1.2"/><rect x="0.7" y="23.8" width="26.6" height="1.7" fill="#c59b46"/></g><rect x="17.5" y="10.5" width="14" height="7" fill="#f4f4f4" stroke="#c2c2c2"/><rect x="21" y="13" width="7" height="2" fill="#9a9a9a"/><path d="M14.5 18 L31.5 18 L25.5 25 L25.5 30 L21 31 L21 25 Z" fill="#9eb0b8" stroke="#6f8088" stroke-width="1"/><path d="M17 19 L24 19 L22 24 Z" fill="#d5dee2"/></svg>
<span id="t18" class="t ui" style="left:204.90px;top:600.67px;font-size:25.2px;line-height:25.2px;transform:scaleX(0.9336);-webkit-text-stroke:0.1px #fff;">WMI Filters</span>
<svg class="ic" style="left:133px;top:607px" width="12" height="20" viewBox="0 0 12 20"><path d="M1.5 1.5 L10 10 L1.5 18.5" stroke="#b0b0b0" stroke-width="2.7" fill="none"/></svg>
<svg class="ic" style="left:161px;top:634px" width="32" height="32" viewBox="0 0 32 32"><linearGradient id="g37" x1="0" y1="0" x2="1" y2="1"><stop offset="0" stop-color="#fdeab0"/><stop offset="1" stop-color="#ebc56c"/></linearGradient><g transform="translate(0,2)"><path d="M12.04 4 L14.0 0.7 L27.3 0.7 L27.3 9 L12.04 9 Z" fill="#e6c16c" stroke="#cba552" stroke-width="1.2"/><rect x="16" y="2" width="8.5" height="2.4" fill="#fff"/><rect x="20.5" y="2" width="4" height="2.4" fill="#3f8ee8"/><path d="M0.7 2.7 L11.200000000000001 2.7 L13.16 7.6 L27.3 7.6 L27.3 25.3 L0.7 25.3 Z" fill="url(#g37)" stroke="#d6ad58" stroke-width="1.2"/><rect x="0.7" y="23.8" width="26.6" height="1.7" fill="#c59b46"/></g><rect x="10.5" y="6.5" width="21" height="24.5" fill="#9fb0c2" stroke="#7a7f88"/><rect x="10" y="6" width="22" height="3.5" fill="#8a4f3a"/><rect x="14" y="11" width="14" height="16" fill="#d6e6f8" stroke="#f4f8fc" stroke-width="1.2"/><rect x="18" y="15" width="7" height="2" fill="#3f6fb8"/><rect x="18" y="19" width="7" height="2" fill="#3f6fb8"/><rect x="10" y="28" width="22" height="3.5" fill="#6c7078"/></svg>
<span id="t19" class="t ui" style="left:203.93px;top:636.67px;font-size:25.2px;line-height:25.2px;transform:scaleX(0.9336);-webkit-text-stroke:0.1px #fff;">Starter GPOs</span>
<svg class="ic" style="left:133px;top:643px" width="12" height="20" viewBox="0 0 12 20"><path d="M1.5 1.5 L10 10 L1.5 18.5" stroke="#b0b0b0" stroke-width="2.7" fill="none"/></svg>
<svg class="ic" style="left:85px;top:670px" width="32" height="32" viewBox="0 0 32 32"><linearGradient id="g38" x1="0" y1="0" x2="1" y2="1"><stop offset="0" stop-color="#fdeab0"/><stop offset="1" stop-color="#ebc56c"/></linearGradient><g transform="translate(0,2)"><path d="M12.04 4 L14.0 0.7 L27.3 0.7 L27.3 9 L12.04 9 Z" fill="#e6c16c" stroke="#cba552" stroke-width="1.2"/><rect x="16" y="2" width="8.5" height="2.4" fill="#fff"/><rect x="20.5" y="2" width="4" height="2.4" fill="#3f8ee8"/><path d="M0.7 2.7 L11.200000000000001 2.7 L13.16 7.6 L27.3 7.6 L27.3 25.3 L0.7 25.3 Z" fill="url(#g38)" stroke="#d6ad58" stroke-width="1.2"/><rect x="0.7" y="23.8" width="26.6" height="1.7" fill="#c59b46"/></g><rect x="14" y="12" width="18" height="19.5" fill="#1f66cc"/><rect x="16" y="14" width="3.8" height="3.8" fill="#a6d4ff"/><rect x="21.3" y="14" width="3.8" height="3.8" fill="#a6d4ff"/><rect x="26.6" y="14" width="3.8" height="3.8" fill="#a6d4ff"/><rect x="16" y="19.3" width="3.8" height="3.8" fill="#a6d4ff"/><rect x="21.3" y="19.3" width="3.8" height="3.8" fill="#a6d4ff"/><rect x="26.6" y="19.3" width="3.8" height="3.8" fill="#a6d4ff"/><rect x="16" y="24.6" width="6" height="3" fill="#a6d4ff"/><rect x="20" y="28" width="12" height="3.5" fill="#0c3f9a"/></svg>
<span id="t20" class="t ui" style="left:127.53px;top:672.67px;font-size:25.2px;line-height:25.2px;transform:scaleX(0.8472);-webkit-text-stroke:0.1px #fff;">Sites</span>
<svg class="ic" style="left:57px;top:679px" width="12" height="20" viewBox="0 0 12 20"><path d="M1.5 1.5 L10 10 L1.5 18.5" stroke="#b0b0b0" stroke-width="2.7" fill="none"/></svg>
<svg class="ic" style="left:85px;top:706px" width="32" height="32" viewBox="0 0 32 32"><linearGradient id="g39" x1="0" y1="0" x2="1" y2="1"><stop offset="0" stop-color="#fdeab0"/><stop offset="1" stop-color="#ebc56c"/></linearGradient><g transform="translate(2,0)"><path d="M7.74 4 L9.0 0.7 L17.3 0.7 L17.3 9 L7.74 9 Z" fill="#e6c16c" stroke="#cba552" stroke-width="1.2"/><rect x="6" y="2" width="8.5" height="2.4" fill="#fff"/><rect x="10.5" y="2" width="4" height="2.4" fill="#3f8ee8"/><path d="M0.7 2.7 L7.2 2.7 L8.459999999999999 7.6 L17.3 7.6 L17.3 15.3 L0.7 15.3 Z" fill="url(#g39)" stroke="#d6ad58" stroke-width="1.2"/><rect x="0.7" y="13.8" width="16.6" height="1.7" fill="#c59b46"/></g><rect x="16" y="4" width="14" height="11" fill="#c9d3df" stroke="#7d8894"/><rect x="19" y="6" width="8" height="6" fill="#1b3fb0"/><rect x="9" y="11" width="17" height="14" fill="#d4dbe4" stroke="#7d8894"/><rect x="11.5" y="13" width="12" height="9" fill="#1f49c4"/><rect x="15" y="14" width="5" height="6" fill="#fff"/><rect x="13" y="26" width="9" height="2.5" fill="#9aa3ad"/><rect x="10" y="28.5" width="15" height="2" fill="#b8bfc7"/><rect x="0" y="14" width="7" height="16" fill="#b5bcc3" stroke="#80888f"/><rect x="2" y="17" width="3" height="3" fill="#48d81c"/></svg>
<span id="t21" class="t ui" style="left:127.81px;top:708.67px;font-size:25.2px;line-height:25.2px;transform:scaleX(0.9370);-webkit-text-stroke:0.1px #fff;">Group Policy Modeling</span>
<svg class="ic" style="left:85px;top:742px" width="32" height="32" viewBox="0 0 32 32"><linearGradient id="g40" x1="0" y1="0" x2="1" y2="1"><stop offset="0" stop-color="#fdeab0"/><stop offset="1" stop-color="#ebc56c"/></linearGradient><g transform="translate(0,2)"><path d="M12.04 4 L14.0 0.7 L27.3 0.7 L27.3 9 L12.04 9 Z" fill="#e6c16c" stroke="#cba552" stroke-width="1.2"/><rect x="16" y="2" width="8.5" height="2.4" fill="#fff"/><rect x="20.5" y="2" width="4" height="2.4" fill="#3f8ee8"/><path d="M0.7 2.7 L11.200000000000001 2.7 L13.16 7.6 L27.3 7.6 L27.3 25.3 L0.7 25.3 Z" fill="url(#g40)" stroke="#d6ad58" stroke-width="1.2"/><rect x="0.7" y="23.8" width="26.6" height="1.7" fill="#c59b46"/></g><rect x="14.6" y="13.6" width="16.8" height="17.8" fill="#f7f9fc" stroke="#a9afb7" stroke-width="1.3"/><path d="M17.5 22 L21 25 M17.5 22 L21 19 M21 20 L27 20 M23 23.5 L28.5 23.5 M23 27 L28.5 27" stroke="#2f64c0" stroke-width="1.6" fill="none"/></svg>
<span id="t22" class="t ui" style="left:127.81px;top:744.67px;font-size:25.2px;line-height:25.2px;transform:scaleX(0.9370);-webkit-text-stroke:0.1px #fff;">Group Policy Results</span>
</aside>
<menu id="contextmenu" class="sec">
<div class="b" style="left:233px;top:280px;width:670px;height:668px;background:#f2f2f2;border:2px solid #cccccc;box-sizing:border-box;"></div>
<div class="b" style="left:239px;top:286px;width:56px;height:656px;background:#f0f0f0;"></div>
<span id="t23" class="t ui" style="left:303.81px;top:294.67px;font-size:25.2px;line-height:25.2px;transform:scaleX(0.9265);-webkit-text-stroke:0.1px #f2f2f2;">Create a GPO in this domain, and Link it here...</span>
<span id="t24" class="t ui" style="left:303.14px;top:338.67px;font-size:25.2px;line-height:25.2px;transform:scaleX(0.9015);-webkit-text-stroke:0.1px #f2f2f2;">Link an Existing GPO...</span>
<span id="t25" class="t ui" style="left:303.05px;top:382.67px;font-size:25.2px;line-height:25.2px;transform:scaleX(0.9441);-webkit-text-stroke:0.1px #f2f2f2;">Block Inheritance</span>
<div class="b" style="left:295px;top:424px;width:602px;height:2px;background:#d7d7d7;"></div>
<span id="t26" class="t ui" style="left:303.80px;top:440.67px;font-size:25.2px;line-height:25.2px;transform:scaleX(0.9450);-webkit-text-stroke:0.1px #f2f2f2;">Group Policy Modeling Wizard...</span>
<span id="t27" class="t ui" style="left:303.05px;top:484.67px;font-size:25.2px;line-height:25.2px;transform:scaleX(0.9456);-webkit-text-stroke:0.1px #f2f2f2;">New Organizational Unit</span>
<div class="b" style="left:295px;top:526px;width:602px;height:2px;background:#d7d7d7;"></div>
<span id="t28" class="t ui" style="left:303.00px;top:542.67px;font-size:25.2px;line-height:25.2px;transform:scaleX(0.8771);-webkit-text-stroke:0.1px #f2f2f2;">Search...</span>
<span id="t29" class="t ui" style="left:303.78px;top:586.67px;font-size:25.2px;line-height:25.2px;transform:scaleX(0.9499);-webkit-text-stroke:0.1px #f2f2f2;">Change Domain Controller...</span>
<span id="t30" class="t ui" style="left:303.11px;top:630.67px;font-size:25.2px;line-height:25.2px;transform:scaleX(0.9160);-webkit-text-stroke:0.1px #f2f2f2;">Remove</span>
<span id="t31" class="t ui" style="left:303.95px;top:674.67px;font-size:25.2px;line-height:25.2px;transform:scaleX(0.9296);-webkit-text-stroke:0.1px #f2f2f2;">Active Directory Users and Computers...</span>
<div class="b" style="left:295px;top:716px;width:602px;height:2px;background:#d7d7d7;"></div>
<span id="t32" class="t ui" style="left:303.01px;top:732.67px;font-size:25.2px;line-height:25.2px;transform:scaleX(0.9629);-webkit-text-stroke:0.1px #f2f2f2;">New Window from Here</span>
<div class="b" style="left:295px;top:774px;width:602px;height:2px;background:#d7d7d7;"></div>
<span id="t33" class="t ui" style="left:303.19px;top:790.67px;font-size:25.2px;line-height:25.2px;transform:scaleX(0.8757);-webkit-text-stroke:0.1px #f2f2f2;">Refresh</span>
<div class="b" style="left:295px;top:832px;width:602px;height:2px;background:#d7d7d7;"></div>
<span id="t34" class="t ui" style="left:303.11px;top:848.67px;font-size:25.2px;line-height:25.2px;transform:scaleX(0.9167);-webkit-text-stroke:0.1px #f2f2f2;">Properties</span>
<div class="b" style="left:295px;top:890px;width:602px;height:2px;background:#d7d7d7;"></div>
<span id="t35" class="t ui" style="left:303.05px;top:906.67px;font-size:25.2px;line-height:25.2px;transform:scaleX(0.9448);-webkit-text-stroke:0.1px #f2f2f2;">Help</span>
<div class="b" style="left:293px;top:338px;width:253px;height:40px;border:3px solid #e63b3f;box-sizing:border-box;box-shadow:2px 3px 5px rgba(0,0,0,0.35);"></div>
</menu>
<main id="details" class="sec">
<div class="b" style="left:959px;top:160px;width:1291px;height:846px;background:#f0f0f0;box-sizing:border-box;border-top:2px solid #a0a0a0;border-left:2px solid #a0a0a0;border-bottom:2px solid #fff;border-right:2px solid #fff;"></div>
<div class="b" style="left:961px;top:162px;width:1287px;height:842px;box-sizing:border-box;border-top:2px solid #696969;border-left:2px solid #696969;border-bottom:2px solid #e3e3e3;border-right:2px solid #e3e3e3;"></div>
<span id="t36" class="t msb" style="left:970.01px;top:171.62px;font-size:28.8px;line-height:28.8px;transform:scaleX(1.0033);-webkit-text-stroke:0.2px #f0f0f0;">Group Policy Objects in citrix.lab</span>
<div class="b" style="left:969px;top:248px;width:1268px;height:746px;background:#fff;border:2px solid #d9d9d9;box-sizing:border-box;"></div>
<div class="b" style="left:1083px;top:212px;width:120px;height:36px;background:#f0f0f0;border:2px solid #d9d9d9;border-bottom:none;box-sizing:border-box;"></div>
<span id="t37" class="t ms" style="left:1092.56px;top:218.67px;font-size:25.2px;line-height:25.2px;transform:scaleX(0.8395);">Delegation</span>
<div class="b" style="left:969px;top:208px;width:116px;height:42px;background:#fff;border:2px solid #d9d9d9;border-bottom:none;box-sizing:border-box;"></div>
<span id="t38" class="t ms" style="left:984.35px;top:214.97px;font-size:25.2px;line-height:25.2px;transform:scaleX(0.8233);">Contents</span>
<div class="b" style="left:987px;top:262px;width:1236px;height:716px;background:#fff;border:2px solid #828790;box-sizing:border-box;"></div>
<div class="b" style="left:1527px;top:266px;width:2px;height:48px;background:#e5e5e5;"></div>
<div class="b" style="left:1767px;top:266px;width:2px;height:48px;background:#e5e5e5;"></div>
<div class="b" style="left:1993px;top:266px;width:2px;height:48px;background:#e5e5e5;"></div>
<div class="b" style="left:2197px;top:266px;width:2px;height:48px;background:#e5e5e5;"></div>
<svg class="ic" style="left:1252px;top:265px" width="16" height="12" viewBox="0 0 16 12"><path d="M1.8 9.2 L8 2.4 L14.2 9.2" stroke="#555555" stroke-width="2" fill="none"/></svg>
<span id="t39" class="t ms" style="left:1003.14px;top:276.67px;font-size:25.2px;line-height:25.2px;transform:scaleX(0.8031);">Name</span>
<span id="t40" class="t ms" style="left:1539.95px;top:276.67px;font-size:25.2px;line-height:25.2px;transform:scaleX(0.8259);">GPO Status</span>
<span id="t41" class="t ms" style="left:1781.61px;top:276.67px;font-size:25.2px;line-height:25.2px;transform:scaleX(0.8187);">WMI Filter</span>
<span id="t42" class="t ms" style="left:2006.69px;top:276.67px;font-size:25.2px;line-height:25.2px;transform:scaleX(0.8260);">Modified</span>
<svg class="ic" style="left:998px;top:316px" width="32" height="32" viewBox="0 0 32 32"><linearGradient id="g41" x1="0" y1="0" x2="1" y2="0"><stop offset="0" stop-color="#ffffff"/><stop offset="1" stop-color="#f6e8b4"/></linearGradient><linearGradient id="g42" x1="0" y1="0" x2="0" y2="1"><stop offset="0" stop-color="#b9a867"/><stop offset="0.3" stop-color="#fffbe6"/><stop offset="0.6" stop-color="#fffbe6"/><stop offset="1" stop-color="#c9b97c"/></linearGradient><g transform="translate(0,0)"><rect x="5" y="0" width="22" height="27" fill="#c6c6c6"/><rect x="23" y="2" width="4" height="25" fill="#9c9ca4"/><rect x="7" y="2" width="17" height="24" fill="url(#g41)"/><rect x="27" y="2" width="4" height="6" fill="#a89858"/><rect x="25" y="2" width="2" height="3" fill="#9c9ca4"/><rect x="11" y="6" width="10" height="2" fill="#8c88aa"/><rect x="11" y="10" width="10" height="2" fill="#8c88aa"/><rect x="11" y="14" width="10" height="2" fill="#8c88aa"/><rect x="11" y="18" width="10" height="2" fill="#8c88aa"/><rect x="1" y="22" width="24" height="8" rx="1.5" fill="url(#g42)" stroke="#b9a867" stroke-width="0.8"/><rect x="21" y="25" width="5" height="5" fill="#9c9ca4" opacity="0.8"/></g></svg>
<span id="t43" class="t ms" style="left:1034.96px;top:318.67px;font-size:25.2px;line-height:25.2px;transform:scaleX(0.8093);">CPM</span>
<span id="t44" class="t ms" style="left:1540.36px;top:318.67px;font-size:25.2px;line-height:25.2px;transform:scaleX(0.8419);">User configuration s...</span>
<span id="t45" class="t ms" style="left:1780.97px;top:318.67px;font-size:25.2px;line-height:25.2px;transform:scaleX(0.8381);">None</span>
<span id="t46" class="t ms" style="left:2007.24px;top:318.67px;font-size:25.2px;line-height:25.2px;transform:scaleX(0.8946);">7/19/2017 8:45:...</span>
<svg class="ic" style="left:998px;top:350px" width="32" height="32" viewBox="0 0 32 32"><linearGradient id="g43" x1="0" y1="0" x2="1" y2="0"><stop offset="0" stop-color="#ffffff"/><stop offset="1" stop-color="#f6e8b4"/></linearGradient><linearGradient id="g44" x1="0" y1="0" x2="0" y2="1"><stop offset="0" stop-color="#b9a867"/><stop offset="0.3" stop-color="#fffbe6"/><stop offset="0.6" stop-color="#fffbe6"/><stop offset="1" stop-color="#c9b97c"/></linearGradient><g transform="translate(0,0)"><rect x="5" y="0" width="22" height="27" fill="#c6c6c6"/><rect x="23" y="2" width="4" height="25" fill="#9c9ca4"/><rect x="7" y="2" width="17" height="24" fill="url(#g43)"/><rect x="27" y="2" width="4" height="6" fill="#a89858"/><rect x="25" y="2" width="2" height="3" fill="#9c9ca4"/><rect x="11" y="6" width="10" height="2" fill="#8c88aa"/><rect x="11" y="10" width="10" height="2" fill="#8c88aa"/><rect x="11" y="14" width="10" height="2" fill="#8c88aa"/><rect x="11" y="18" width="10" height="2" fill="#8c88aa"/><rect x="1" y="22" width="24" height="8" rx="1.5" fill="url(#g44)" stroke="#b9a867" stroke-width="0.8"/><rect x="21" y="25" width="5" height="5" fill="#9c9ca4" opacity="0.8"/></g></svg>
<span id="t47" class="t ms" style="left:1035.30px;top:352.67px;font-size:25.2px;line-height:25.2px;transform:scaleX(0.8225);">Default Domain Controllers Policy</span>
<span id="t48" class="t ms" style="left:1540.27px;top:352.67px;font-size:25.2px;line-height:25.2px;transform:scaleX(0.8361);">Enabled</span>
<span id="t49" class="t ms" style="left:1780.97px;top:352.67px;font-size:25.2px;line-height:25.2px;transform:scaleX(0.8381);">None</span>
<span id="t50" class="t ms" style="left:2007.54px;top:352.67px;font-size:25.2px;line-height:25.2px;transform:scaleX(0.8931);">3/9/2017 9:53:3...</span>
<svg class="ic" style="left:998px;top:384px" width="32" height="32" viewBox="0 0 32 32"><linearGradient id="g45" x1="0" y1="0" x2="1" y2="0"><stop offset="0" stop-color="#ffffff"/><stop offset="1" stop-color="#f6e8b4"/></linearGradient><linearGradient id="g46" x1="0" y1="0" x2="0" y2="1"><stop offset="0" stop-color="#b9a867"/><stop offset="0.3" stop-color="#fffbe6"/><stop offset="0.6" stop-color="#fffbe6"/><stop offset="1" stop-color="#c9b97c"/></linearGradient><g transform="translate(0,0)"><rect x="5" y="0" width="22" height="27" fill="#c6c6c6"/><rect x="23" y="2" width="4" height="25" fill="#9c9ca4"/><rect x="7" y="2" width="17" height="24" fill="url(#g45)"/><rect x="27" y="2" width="4" height="6" fill="#a89858"/><rect x="25" y="2" width="2" height="3" fill="#9c9ca4"/><rect x="11" y="6" width="10" height="2" fill="#8c88aa"/><rect x="11" y="10" width="10" height="2" fill="#8c88aa"/><rect x="11" y="14" width="10" height="2" fill="#8c88aa"/><rect x="11" y="18" width="10" height="2" fill="#8c88aa"/><rect x="1" y="22" width="24" height="8" rx="1.5" fill="url(#g46)" stroke="#b9a867" stroke-width="0.8"/><rect x="21" y="25" width="5" height="5" fill="#9c9ca4" opacity="0.8"/></g></svg>
<span id="t51" class="t ms" style="left:1035.28px;top:386.67px;font-size:25.2px;line-height:25.2px;transform:scaleX(0.8324);">Default Domain Policy</span>
<span id="t52" class="t ms" style="left:1540.27px;top:386.67px;font-size:25.2px;line-height:25.2px;transform:scaleX(0.8361);">Enabled</span>
<span id="t53" class="t ms" style="left:1780.97px;top:386.67px;font-size:25.2px;line-height:25.2px;transform:scaleX(0.8381);">None</span>
<span id="t54" class="t ms" style="left:2007.54px;top:386.67px;font-size:25.2px;line-height:25.2px;transform:scaleX(0.8955);">3/19/2018 10:5...</span>
<svg class="ic" style="left:998px;top:418px" width="32" height="32" viewBox="0 0 32 32"><linearGradient id="g47" x1="0" y1="0" x2="1" y2="0"><stop offset="0" stop-color="#ffffff"/><stop offset="1" stop-color="#f6e8b4"/></linearGradient><linearGradient id="g48" x1="0" y1="0" x2="0" y2="1"><stop offset="0" stop-color="#b9a867"/><stop offset="0.3" stop-color="#fffbe6"/><stop offset="0.6" stop-color="#fffbe6"/><stop offset="1" stop-color="#c9b97c"/></linearGradient><g transform="translate(0,0)"><rect x="5" y="0" width="22" height="27" fill="#c6c6c6"/><rect x="23" y="2" width="4" height="25" fill="#9c9ca4"/><rect x="7" y="2" width="17" height="24" fill="url(#g47)"/><rect x="27" y="2" width="4" height="6" fill="#a89858"/><rect x="25" y="2" width="2" height="3" fill="#9c9ca4"/><rect x="11" y="6" width="10" height="2" fill="#8c88aa"/><rect x="11" y="10" width="10" height="2" fill="#8c88aa"/><rect x="11" y="14" width="10" height="2" fill="#8c88aa"/><rect x="11" y="18" width="10" height="2" fill="#8c88aa"/><rect x="1" y="22" width="24" height="8" rx="1.5" fill="url(#g48)" stroke="#b9a867" stroke-width="0.8"/><rect x="21" y="25" width="5" height="5" fill="#9c9ca4" opacity="0.8"/></g></svg>
<span id="t55" class="t ms" style="left:1035.26px;top:420.67px;font-size:25.2px;line-height:25.2px;transform:scaleX(0.8409);">Disable MS Teams AutoStart</span>
<span id="t56" class="t ms" style="left:1540.27px;top:420.67px;font-size:25.2px;line-height:25.2px;transform:scaleX(0.8361);">Enabled</span>
<span id="t57" class="t ms" style="left:1780.97px;top:420.67px;font-size:25.2px;line-height:25.2px;transform:scaleX(0.8381);">None</span>
<span id="t58" class="t ms" style="left:2007.54px;top:420.67px;font-size:25.2px;line-height:25.2px;transform:scaleX(0.8931);">3/16/2022 9:50:...</span>
<div class="b" style="left:1031px;top:450px;width:1190px;height:34px;background:#f0f0f0;"></div>
<svg class="ic" style="left:998px;top:452px" width="32" height="32" viewBox="0 0 32 32"><linearGradient id="g49" x1="0" y1="0" x2="1" y2="0"><stop offset="0" stop-color="#dbe6ee"/><stop offset="1" stop-color="#a9c0d2"/></linearGradient><linearGradient id="g50" x1="0" y1="0" x2="0" y2="1"><stop offset="0" stop-color="#7f97ab"/><stop offset="0.3" stop-color="#d6e3ec"/><stop offset="0.6" stop-color="#d6e3ec"/><stop offset="1" stop-color="#8aa0b3"/></linearGradient><g transform="translate(0,0)"><rect x="5" y="0" width="22" height="27" fill="#9db0c0"/><rect x="23" y="2" width="4" height="25" fill="#6e8599"/><rect x="7" y="2" width="17" height="24" fill="url(#g49)"/><rect x="27" y="2" width="4" height="6" fill="#6f879b"/><rect x="25" y="2" width="2" height="3" fill="#6e8599"/><rect x="11" y="6" width="10" height="2" fill="#4f6a96"/><rect x="11" y="10" width="10" height="2" fill="#4f6a96"/><rect x="11" y="14" width="10" height="2" fill="#4f6a96"/><rect x="11" y="18" width="10" height="2" fill="#4f6a96"/><rect x="1" y="22" width="24" height="8" rx="1.5" fill="url(#g50)" stroke="#7f97ab" stroke-width="0.8"/><rect x="21" y="25" width="5" height="5" fill="#6e8599" opacity="0.8"/></g></svg>
<span id="t59" class="t ms" style="left:1035.31px;top:454.67px;font-size:25.2px;line-height:25.2px;transform:scaleX(0.8195);">Domain Controller Auto Certificate Enrollment</span>
<span id="t60" class="t ms" style="left:1540.27px;top:454.67px;font-size:25.2px;line-height:25.2px;transform:scaleX(0.8361);">Enabled</span>
<span id="t61" class="t ms" style="left:1780.97px;top:454.67px;font-size:25.2px;line-height:25.2px;transform:scaleX(0.8381);">None</span>
<span id="t62" class="t ms" style="left:2007.42px;top:454.67px;font-size:25.2px;line-height:25.2px;transform:scaleX(0.8937);">8/1/2023 1:41:4...</span>
<svg class="ic" style="left:998px;top:486px" width="32" height="32" viewBox="0 0 32 32"><linearGradient id="g51" x1="0" y1="0" x2="1" y2="0"><stop offset="0" stop-color="#ffffff"/><stop offset="1" stop-color="#f6e8b4"/></linearGradient><linearGradient id="g52" x1="0" y1="0" x2="0" y2="1"><stop offset="0" stop-color="#b9a867"/><stop offset="0.3" stop-color="#fffbe6"/><stop offset="0.6" stop-color="#fffbe6"/><stop offset="1" stop-color="#c9b97c"/></linearGradient><g transform="translate(0,0)"><rect x="5" y="0" width="22" height="27" fill="#c6c6c6"/><rect x="23" y="2" width="4" height="25" fill="#9c9ca4"/><rect x="7" y="2" width="17" height="24" fill="url(#g51)"/><rect x="27" y="2" width="4" height="6" fill="#a89858"/><rect x="25" y="2" width="2" height="3" fill="#9c9ca4"/><rect x="11" y="6" width="10" height="2" fill="#8c88aa"/><rect x="11" y="10" width="10" height="2" fill="#8c88aa"/><rect x="11" y="14" width="10" height="2" fill="#8c88aa"/><rect x="11" y="18" width="10" height="2" fill="#8c88aa"/><rect x="1" y="22" width="24" height="8" rx="1.5" fill="url(#g52)" stroke="#b9a867" stroke-width="0.8"/><rect x="21" y="25" width="5" height="5" fill="#9c9ca4" opacity="0.8"/></g></svg>
<span id="t63" class="t ms" style="left:1035.91px;top:488.67px;font-size:25.2px;line-height:25.2px;transform:scaleX(0.8261);">VDA Policy</span>
<span id="t64" class="t ms" style="left:1540.27px;top:488.67px;font-size:25.2px;line-height:25.2px;transform:scaleX(0.8361);">Enabled</span>
<span id="t65" class="t ms" style="left:1780.97px;top:488.67px;font-size:25.2px;line-height:25.2px;transform:scaleX(0.8381);">None</span>
<span id="t66" class="t ms" style="left:2007.41px;top:488.67px;font-size:25.2px;line-height:25.2px;transform:scaleX(0.9025);">8/11/2022 1:31:...</span>
<svg class="ic" style="left:998px;top:520px" width="32" height="32" viewBox="0 0 32 32"><linearGradient id="g53" x1="0" y1="0" x2="1" y2="0"><stop offset="0" stop-color="#ffffff"/><stop offset="1" stop-color="#f6e8b4"/></linearGradient><linearGradient id="g54" x1="0" y1="0" x2="0" y2="1"><stop offset="0" stop-color="#b9a867"/><stop offset="0.3" stop-color="#fffbe6"/><stop offset="0.6" stop-color="#fffbe6"/><stop offset="1" stop-color="#c9b97c"/></linearGradient><g transform="translate(0,0)"><rect x="5" y="0" width="22" height="27" fill="#c6c6c6"/><rect x="23" y="2" width="4" height="25" fill="#9c9ca4"/><rect x="7" y="2" width="17" height="24" fill="url(#g53)"/><rect x="27" y="2" width="4" height="6" fill="#a89858"/><rect x="25" y="2" width="2" height="3" fill="#9c9ca4"/><rect x="11" y="6" width="10" height="2" fill="#8c88aa"/><rect x="11" y="10" width="10" height="2" fill="#8c88aa"/><rect x="11" y="14" width="10" height="2" fill="#8c88aa"/><rect x="11" y="18" width="10" height="2" fill="#8c88aa"/><rect x="1" y="22" width="24" height="8" rx="1.5" fill="url(#g54)" stroke="#b9a867" stroke-width="0.8"/><rect x="21" y="25" width="5" height="5" fill="#9c9ca4" opacity="0.8"/></g></svg>
<span id="t67" class="t ms" style="left:1035.91px;top:522.67px;font-size:25.2px;line-height:25.2px;transform:scaleX(0.8453);">WEM</span>
<span id="t68" class="t ms" style="left:1540.27px;top:522.67px;font-size:25.2px;line-height:25.2px;transform:scaleX(0.8361);">Enabled</span>
<span id="t69" class="t ms" style="left:1780.97px;top:522.67px;font-size:25.2px;line-height:25.2px;transform:scaleX(0.8381);">None</span>
<span id="t70" class="t ms" style="left:2007.42px;top:522.67px;font-size:25.2px;line-height:25.2px;transform:scaleX(0.8937);">8/25/2022 9:21:...</span>
<div class="b" style="left:2205px;top:264px;width:14px;height:300px;overflow:hidden"><span id="t71" class="t ms" style="left:5.79px;top:12.67px;font-size:25.2px;line-height:25.2px;transform:scaleX(0.8448);">Owner</span><span id="t72" class="t ms" style="left:5.75px;top:54.67px;font-size:25.2px;line-height:25.2px;transform:scaleX(0.8448);">Domain Admins</span><span id="t73" class="t ms" style="left:5.75px;top:88.67px;font-size:25.2px;line-height:25.2px;transform:scaleX(0.8448);">Domain Admins</span><span id="t74" class="t ms" style="left:5.75px;top:122.67px;font-size:25.2px;line-height:25.2px;transform:scaleX(0.8448);">Domain Admins</span><span id="t75" class="t ms" style="left:5.75px;top:156.67px;font-size:25.2px;line-height:25.2px;transform:scaleX(0.8448);">Domain Admins</span><span id="t76" class="t ms" style="left:5.75px;top:190.67px;font-size:25.2px;line-height:25.2px;transform:scaleX(0.8448);">Domain Admins</span><span id="t77" class="t ms" style="left:5.75px;top:224.67px;font-size:25.2px;line-height:25.2px;transform:scaleX(0.8448);">Domain Admins</span><span id="t78" class="t ms" style="left:5.75px;top:258.67px;font-size:25.2px;line-height:25.2px;transform:scaleX(0.8448);">Domain Admins</span></div>
<div class="b" style="left:991px;top:940px;width:1228px;height:34px;background:#f0f0f0;"></div>
<div class="b" style="left:1025px;top:942px;width:1030px;height:32px;background:#cdcdcd;"></div>
<svg class="ic" style="left:1000px;top:949px" width="14" height="16" viewBox="0 0 14 16"><path d="M11.5 1.5 L4 8 L11.5 14.5" stroke="#5c5c5c" stroke-width="4" fill="none"/></svg>
<svg class="ic" style="left:2196px;top:949px" width="14" height="16" viewBox="0 0 14 16"><path d="M2.5 1.5 L10 8 L2.5 14.5" stroke="#5c5c5c" stroke-width="4" fill="none"/></svg>
</main>
<footer id="statusbar" class="sec">
<div class="b" style="left:0px;top:1006px;width:2248px;height:2px;background:#d7d7d7;"></div>
<div class="b" style="left:1809px;top:1010px;width:2px;height:24px;background:#d7d7d7;"></div>
<div class="b" style="left:2075px;top:1010px;width:2px;height:24px;background:#d7d7d7;"></div>
<div class="b" style="left:2245px;top:1010px;width:2px;height:24px;background:#d7d7d7;"></div>
</footer>
</body></html>
